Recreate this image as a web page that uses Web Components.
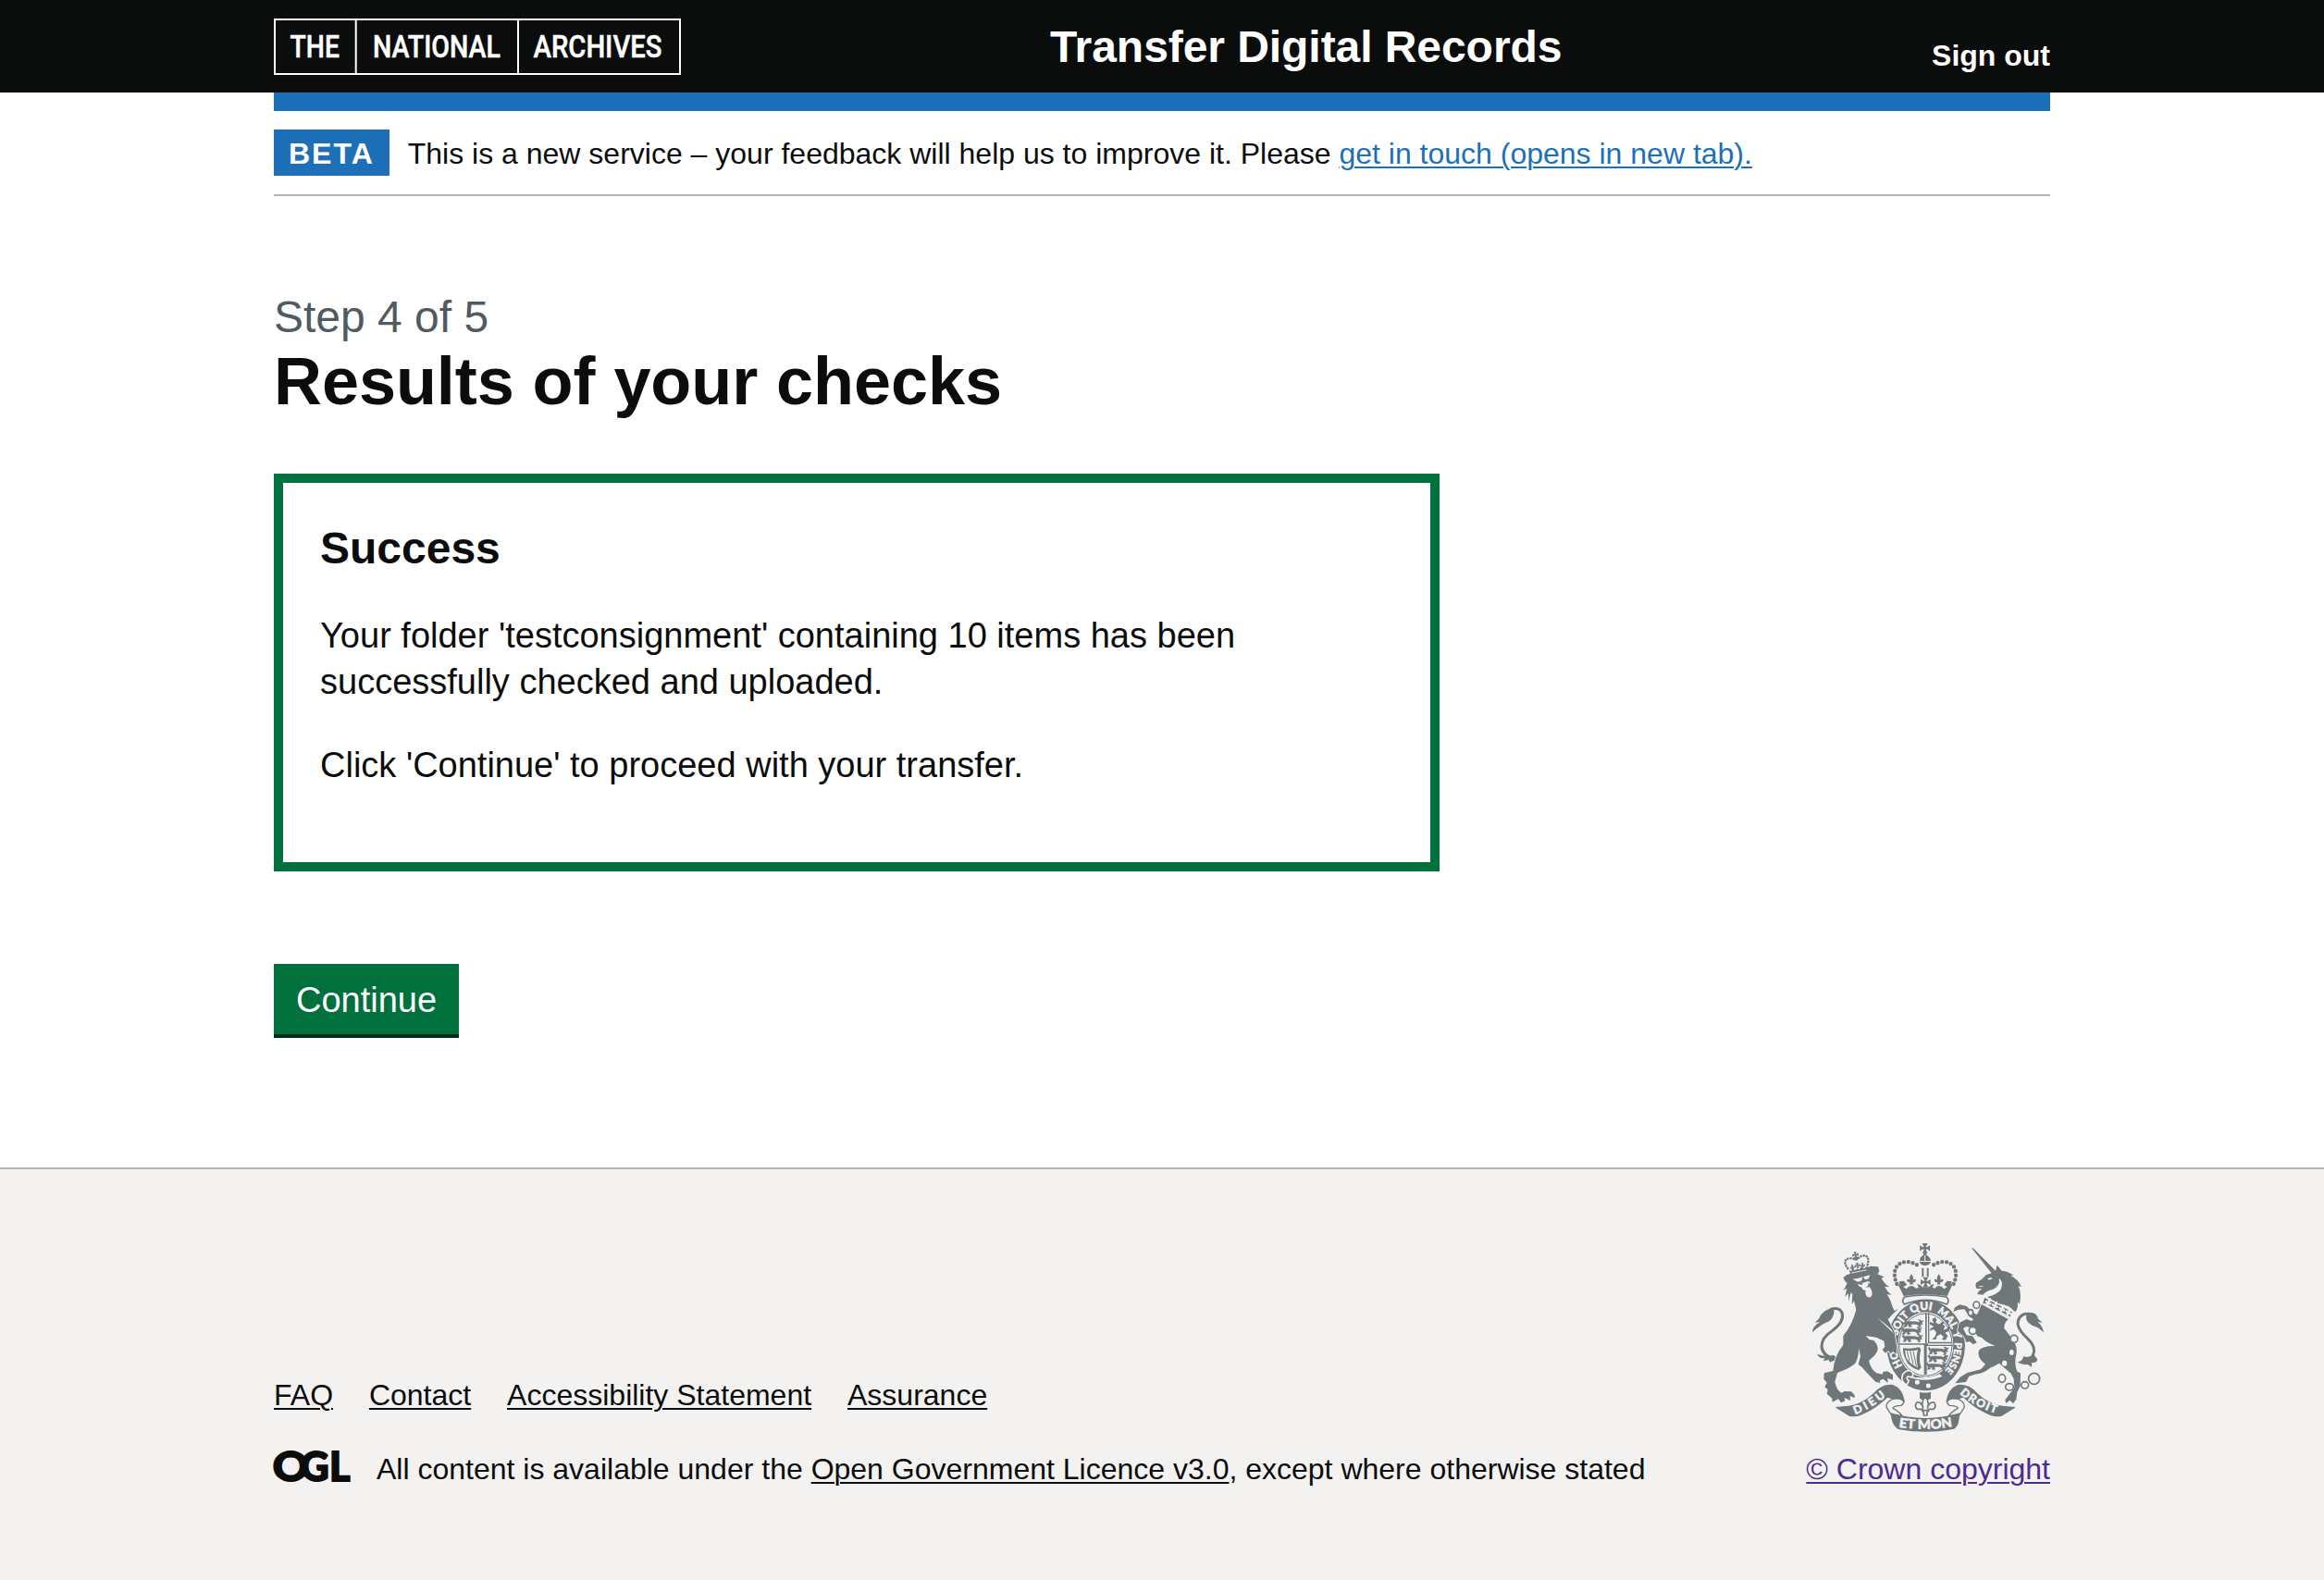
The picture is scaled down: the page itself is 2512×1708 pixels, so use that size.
<!DOCTYPE html>
<html lang="en">
<head>
<meta charset="utf-8">
<title>Results of your checks - Transfer Digital Records</title>
<style>
  html, body { margin: 0; padding: 0; }
  body {
    font-family: "Liberation Sans", Arial, Helvetica, sans-serif;
    font-size: 32px; line-height: 40px; color: #0b0c0c; background: #fff;
  }
</style>
</head>
<body>
<tdr-page></tdr-page>

<script>
const LINK = `
  a { color: inherit; text-decoration: underline; text-decoration-thickness: 2px; text-underline-offset: 3px; }
`;
const define = (name, css, html) => {
  const template = document.createElement('template');
  template.innerHTML = `<style>*{box-sizing:border-box}${css}</style>${html}`;
  customElements.define(name, class extends HTMLElement {
    constructor() {
      super();
      this.attachShadow({ mode: 'open' }).append(template.content.cloneNode(true));
    }
  });
};

/* Centred 1920px column shared by every band of the page */
define('tdr-container', `:host{display:block;width:1920px;margin:0 auto}`, `<slot></slot>`);

define('tna-logo', `:host{display:block;width:440px;height:62px} svg{display:block}`, `
<svg width="440" height="62" viewBox="296 20 440 62">
  <path d="M297,21H735V80H297ZM384.7,21V80M560,21V80" fill="none" stroke="#fff" stroke-width="2"/>
  <g fill="#fff" stroke="#fff" stroke-width=".5" font-family="Roboto, sans-serif" font-weight="500" font-size="33.8">
    <text x="313.5" y="62.3" textLength="53.5" lengthAdjust="spacingAndGlyphs">THE</text>
    <text x="403" y="62.3" textLength="138" lengthAdjust="spacingAndGlyphs">NATIONAL</text>
    <text x="576.5" y="62.3" textLength="139" lengthAdjust="spacingAndGlyphs">ARCHIVES</text>
  </g>
</svg>`);

define('tdr-header', `
  :host{display:block;background:#0b0c0c;color:#fff;height:100px}
  .row{display:grid;grid-template-columns:839px 1fr auto;height:100px;align-items:start}
  tna-logo{margin-top:20px}
  .title{font-size:48px;line-height:60px;font-weight:700;letter-spacing:-.06px;margin-top:21px;white-space:nowrap}
  .out{font-weight:700;margin-top:40px;color:#fff;text-decoration:none}`,
`<tdr-container><div class="row">
  <tna-logo></tna-logo><div class="title">Transfer Digital Records</div><a class="out">Sign out</a>
</div></tdr-container>`);

define('tdr-phase-banner', `
  :host{display:block;border-top:20px solid #1d70b8;border-bottom:2px solid #b1b4b6;padding:20px 0;height:112px}
  .row{display:flex;align-items:flex-start}
  .tag{background:#1d70b8;color:#fff;font-weight:700;letter-spacing:2px;line-height:32px;padding:10px 16px 8px;margin-right:20px;height:50px}
  .text{line-height:40px;padding-top:6px} ${LINK} a{color:#1d70b8}`,
`<div class="row"><strong class="tag">BETA</strong>
<span class="text">This is a new service – your feedback will help us to improve it. Please <a>get in touch (opens in new tab).</a></span></div>`);

define('tdr-heading', `
  :host{display:block}
  .caption{display:block;font-size:48px;line-height:60px;height:60px;padding-top:1px;color:#505a5f}
  h1{font-size:72px;line-height:80px;font-weight:700;letter-spacing:-.06px;margin:0}`,
`<span class="caption"><slot name="caption"></slot></span><h1><slot></slot></h1>`);

define('tdr-success-summary', `
  :host{display:block;width:1260px;border:10px solid #00703c;padding:40px;font-size:38px;line-height:50px}
  h2{font-size:48px;line-height:60px;height:60px;padding-top:1px;font-weight:700;margin:0 0 40px}`,
`<h2><slot name="title"></slot></h2><slot></slot>`);

define('tdr-button', `
  :host{display:block}
  button{display:block;width:200px;font:400 38px/38px "Liberation Sans",Arial,sans-serif;color:#fff;background:#00703c;
    border:4px solid transparent;padding:16px 20px 14px;box-shadow:0 4px 0 #002d18;border-radius:0;margin:0;white-space:nowrap}`,
`<button><slot></slot></button>`);

define('ogl-logo', `:host{display:block;width:84px;height:40px} svg{display:block;overflow:visible}`, `
<svg width="84" height="40" viewBox="296 1568 84 40">
  <g fill="#0b0c0c" stroke="#0b0c0c" stroke-width="1.8" font-family="Lato, sans-serif" font-weight="900" font-size="43">
    <text transform="translate(294.8 1600.6) scale(1.12 1)">O</text>
    <text x="324.5" y="1600.6">G</text>
    <text x="356" y="1600.6">L</text>
  </g>
</svg>`);

/* Royal coat of arms */
const fleur = (x, y, s = 1) => `<path transform="translate(${x} ${y}) scale(${s})" d="M0,-16Q9,-5 3,4Q8,-4 13,1Q14,8 8,9L4,8L5,15H-5L-4,8L-8,9Q-14,8 -13,1Q-8,-4 -3,4Q-9,-5 0,-16Z"/>`;
const cross = (x, y, s = 1) => `<path transform="translate(${x} ${y}) scale(${s})" d="M-9,-16H9Q3,-8 3,-3Q8,-3 16,-9V9Q8,3 3,3Q3,8 9,16H-9Q-3,8 -3,3Q-8,3 -16,9V-9Q-8,-3 -3,-3Q-3,-8 -9,-16Z"/>`;
const passant = (x, y) => `<path stroke="#6f777b" stroke-width="1.2" transform="translate(${x} ${y}) scale(1 1.15)" d="M-34,-7L-29,-11L-26,-5L-20,-7L8,-6L18,-4L22,-8L16,-11L23,-11L27,-8L33,-9L28,-3L30,3L23,1L25,9L17,10L19,6L10,1L-3,1L-9,3L-4,8L-13,10L-15,4L-20,2L-21,8L-31,9L-27,3L-30,-2Z"/>`;
define('royal-arms', `:host{display:block;width:252px;height:204px} svg{display:block;overflow:visible}`, `
<svg width="252" height="204" viewBox="54 42 756 612">
 <defs>
  <path id="motto" pathLength="360" d="M424,484A94,113 0 0 1 424,258A94,113 0 0 1 424,484"/>
  <path id="r1" d="M196,597Q250,579 304,530"/>
  <path id="r2" d="M337,638Q424,652 514,636"/>
  <path id="r3" d="M534,529Q586,577 670,599"/>
 </defs>
 <g fill="#6f777b">
  <!-- garter and shield -->
  <ellipse cx="425" cy="373" rx="127" ry="147"/>
  <ellipse cx="424" cy="371" rx="90" ry="106" fill="#f3f2f1"/>
  <ellipse cx="424" cy="371" rx="86" ry="101" fill="none" stroke="#6f777b" stroke-width="3"/>
  <path d="M419,268H423V367H337V371H419V468H428V375H512V371H432V268H436V362H508V367H428V268Z"/>
  ${passant(384,303)}${passant(379,327)}${passant(382,351)}
  ${passant(466,391)}${passant(465,416)}${passant(460,441)}
  <path d="M446,287L455,282L460,290L457,299L468,305L478,296L486,298L480,304L487,312L482,323L494,319L499,308L491,303L494,296L502,308L501,326L487,332L496,342L489,356L476,354L483,346L473,337L461,343L458,354L445,354L455,344L459,331L450,321L437,326L441,317L451,312L439,306L437,296L451,302L447,294Z"/>
  <path d="M351,382Q378,386 404,379L409,386Q400,420 410,445L402,454Q368,444 357,414Q350,400 351,382ZM358,389Q358,411 366,420Q380,438 399,444Q391,410 399,388Q377,393 358,389Z" fill-rule="evenodd"/>
  <path d="M364,392L372,424M374,392L384,434M384,392L394,440" stroke="#6f777b" stroke-width="3"/>
  <!-- strap end and buckle -->
  <path d="M362,470Q425,488 470,466L478,474Q425,496 362,474Z" fill="#f3f2f1"/>
  <path d="M350,491Q344,476 352,464Q365,448 380,459Q388,470 378,476L366,474Q360,480 370,488L362,503Z" stroke="#f3f2f1" stroke-width="5" stroke-linejoin="round"/>
  <circle cx="397" cy="493" r="7.5" fill="#f3f2f1"/><circle cx="433" cy="504" r="7.5" fill="#f3f2f1"/>
  <g fill="#f3f2f1" stroke="#f3f2f1" stroke-width="1.4" font-family="Lato, sans-serif" font-weight="900" font-size="34">
   <text><textPath href="#motto" startOffset="50">HO</textPath></text>
   <text><textPath href="#motto" startOffset="106">SOIT</textPath></text>
   <text font-size="36"><textPath href="#motto" startOffset="154">QUI</textPath></text>
   <text><textPath href="#motto" startOffset="201">MAL</textPath></text>
   <text><textPath href="#motto" startOffset="247">Y</textPath></text>
   <text font-size="32"><textPath href="#motto" startOffset="266">PENSE</textPath></text>
  </g>
  <!-- central crown -->
  ${cross(422,58,1.02)}
  <path d="M417,74H427V80Q439,85 441,99L405,99Q406,84 417,80ZM404,102H441Q437,113 422,115Q408,113 404,102Z"/>
  <path d="M422,81V99" stroke="#f3f2f1" stroke-width="3"/>
  <g fill="none" stroke="#6f777b" stroke-width="13" stroke-linecap="round" stroke-dasharray="0 14.5">
   <path d="M331,174C315,138 325,105 360,102Q382,102 402,116"/>
   <path d="M515,174C531,138 521,105 486,102Q464,102 444,116"/>
  </g>
  <path d="M415,122V151M431,122V151" stroke="#6f777b" stroke-width="6"/>
  ${fleur(378,159,1.1)}${fleur(467,159,1.1)}${cross(424,168,1)}
  <path d="M333,172L341,178L338,166L353,164L364,176L352,184L362,190Q370,180 378,180Q388,180 392,188L402,186L396,174L408,178L412,184H436L440,178L452,174L446,186L455,188Q459,180 467,180Q476,180 484,190L494,184L484,176L494,164L509,166L506,178L513,172L494,213Q423,202 353,213Z"/>
  <path d="M357,216Q424,204 491,216Q504,226 493,240Q424,212 355,240Q344,227 357,216Z" fill="#f3f2f1" stroke="#6f777b" stroke-width="5"/>
  <!-- lion -->
  <path d="M130,418Q88,405 87,376Q87,347 121,326Q160,297 154,270Q146,246 114,257" fill="none" stroke="#6f777b" stroke-width="9"/>
  <path d="M57,331Q56,311 82,297L65,299L79,286Q88,256 127,252Q130,281 111,295Q82,307 57,331ZM72,401Q94,411 126,405L140,416L114,428L110,420L92,424L97,415Q79,416 72,401Z"/>
  <path stroke="#f3f2f1" stroke-width="5" paint-order="stroke" d="M157,153L168,145L246,116L270,118L274,132L268,142L290,151L281,155Q289,172 307,184L291,182Q298,197 314,210L299,207Q310,223 317,248L323,261L336,255L319,270L302,289L322,326L330,376L329,402L318,393L310,400L304,391L294,398L284,388L292,377L289,359L264,347L230,342L241,354L256,357L264,367Q276,388 260,404L240,423Q246,450 265,463L284,467L286,459L300,457L318,469L318,485L301,480L302,495L287,482L276,487L277,495L262,491L231,459L217,443L206,435L213,407L207,381Q208,410 196,431Q183,445 138,462L130,491Q136,521 152,527L161,522L183,523L194,535L194,544L179,537L180,552L161,543L163,553L150,559L141,547L122,557L121,545L104,530L107,516L97,508L104,494L94,482L95,463L124,456Q128,406 157,372L157,342Q185,309 199,258L192,229L185,240L187,207L182,201L174,230L174,204L163,215L169,188L158,195L170,171L163,165Z"/>
  <g fill="#f3f2f1">
   <path d="M187,157Q204,159 220,151L217,163Q206,169 199,165ZM222,151L244,145L239,157L228,160ZM205,173L218,178L219,171L237,165L245,169L237,178Q251,190 251,208Q247,221 236,216Q226,209 230,195L221,193L217,185L207,181Z"/>
   <path d="M270,286L320,334L313,321L288,299Z"/>
  </g>
  <path d="M237,168L245,183L230,186L239,179Z"/>
  <!-- lion crown -->
  <g transform="rotate(-11 204 118)">
   <path d="M174,121L181,129L185,118L192,128L202,124L207,128L216,119L222,129L229,124L236,121L232,139H177Z"/>
   ${fleur(187,115,.6)}${fleur(221,115,.6)}${cross(204,114,.55)}${cross(204,79,.62)}
   <path d="M180,134H230" stroke="#f3f2f1" stroke-width="2.5"/>
   <path d="M171,117C155,87 181,78 201,94M237,117C253,87 227,78 207,94" fill="none" stroke="#6f777b" stroke-width="8" stroke-linecap="round" stroke-dasharray="0 9.3"/>
   <circle cx="204" cy="91" r="7"/>
  </g>
  <!-- unicorn -->
  <path d="M750,270Q723,276 723,305Q729,329 756,352Q785,380 772,405Q767,422 743,421" fill="none" stroke="#6f777b" stroke-width="9"/>
  <path d="M727,279Q745,264 766,267Q785,268 789,287L804,300L787,296Q804,309 807,332Q791,313 769,308Q746,296 751,274ZM741,409Q759,416 775,402L787,419Q784,430 769,429L768,443L755,435Q735,438 722,427Q739,426 741,409Z"/>
  <path d="M573,57Q579,56 583,62L651,131L656,113L671,131Q692,132 709,146L700,147Q723,158 735,183L725,180Q736,207 729,239L722,232Q726,252 715,265L693,246L658,236L625,216Q657,208 668,192Q678,166 662,155Q668,179 641,192Q622,195 610,209L592,207L596,198L607,190L590,189L586,180L588,170L607,158L620,145L638,139Z"/>
  <path d="M625,156L637,153L641,157L629,161ZM593,184L603,180L614,183Z" fill="#f3f2f1"/>
  <path stroke="#f3f2f1" stroke-width="5" paint-order="stroke" d="M612,226L694,287Q678,298 679,318Q694,337 710,358Q723,382 718,402Q710,436 722,459L732,463L731,505L721,525L718,548L708,562L697,551L685,561L682,550L701,525L712,510L710,482L701,464Q677,444 663,431Q647,441 633,446Q617,462 584,467L565,473L555,492L520,496L536,476L559,462L603,451L618,434Q588,411 597,389Q609,374 650,375Q619,363 607,349L592,343L578,318L556,312L546,318L557,340L576,343L590,364L579,370L566,360L557,364L548,344L528,326L533,300L557,288L573,294L580,289L566,280L550,256L531,257L514,264L519,250L535,241L557,246L578,268L591,273Z"/>
  <path d="M614,216L708,264L696,288L607,238Z" fill="#6f777b" stroke="#f3f2f1" stroke-width="4"/>
  <path d="M612,238L697,283" stroke="#f3f2f1" stroke-width="6"/>
  <g fill="#f3f2f1" transform="rotate(26 660 250)">${fleur(624,247,.85)}${fleur(648,247,.85)}${fleur(673,247,.85)}${fleur(697,247,.85)}</g>
  <!-- chain -->
  <g fill="#f3f2f1" stroke="#6f777b" stroke-width="5">
   <ellipse cx="589" cy="242" rx="10" ry="11"/><ellipse cx="570" cy="267" rx="8" ry="10"/>
   <circle cx="577" cy="325" r="12"/><circle cx="711" cy="352" r="12"/>
   <ellipse cx="672" cy="480" rx="11" ry="13"/><ellipse cx="696" cy="508" rx="13" ry="11"/>
   <ellipse cx="746" cy="502" rx="12" ry="11"/><circle cx="776" cy="481" r="18"/>
  </g>
  <ellipse cx="703" cy="396" rx="7" ry="9" fill="#f3f2f1"/><ellipse cx="680" cy="431" rx="8" ry="9" fill="#f3f2f1"/>
  <!-- ribbon -->
  <g stroke="#6f777b" stroke-width="4" stroke-linejoin="round">
   <path fill="#f3f2f1" d="M322,545Q293,557 298,575L314,600L348,601Q338,588 318,577Q320,569 345,568Q357,561 352,546Z"/>
   <path d="M135,574Q209,576 254,532Q282,499 318,503Q349,515 354,556Q341,540 321,546L300,540Q258,580 212,598Q193,605 176,600Z"/>
  </g>
  <g stroke="#6f777b" stroke-width="4" stroke-linejoin="round" transform="translate(847 0) scale(-1 1)">
   <path fill="#f3f2f1" d="M322,545Q293,557 298,575L314,600L348,601Q338,588 318,577Q320,569 345,568Q357,561 352,546Z"/>
   <path d="M135,574Q209,576 254,532Q282,499 318,503Q349,515 354,556Q341,540 321,546L300,540Q258,580 212,598Q193,605 176,600Z"/>
  </g>
  <path d="M311,592Q424,626 536,592L530,626Q524,643 509,646Q424,661 339,646Q314,638 311,592Z"/>
  <g fill="#f3f2f1" stroke="#f3f2f1" stroke-width="1.4" font-family="Lato, sans-serif" font-weight="900">
   <text font-size="37"><textPath href="#r1" textLength="116">DIEU</textPath></text>
   <text font-size="42"><textPath href="#r2" textLength="175" lengthAdjust="spacingAndGlyphs">ET MON</textPath></text>
   <text font-size="37"><textPath href="#r3" textLength="136">DROIT</textPath></text>
  </g>
  <!-- fleur-de-lis below the garter -->
  <path d="M405,524Q422,529 441,524V545L430,551L423,538L416,551L405,545Z"/>
  <path d="M423,540Q438,556 430,575Q437,555 451,558Q461,570 450,580L432,580L434,586L429,590V600H418V590L413,586L415,580L397,580Q386,570 396,558Q410,555 416,575Q408,556 423,540Z" fill="#f3f2f1" stroke="#6f777b" stroke-width="5" stroke-linejoin="round"/>
  <path d="M411,584H435" stroke="#6f777b" stroke-width="5"/>
 </g>
</svg>`);

define('tdr-footer', `
  :host{display:block;background:#f3f2f1;border-top:2px solid #b1b4b6;padding:80px 0 0;height:446px}
  .row{display:flex;justify-content:space-between;align-items:flex-end}
  .links{display:flex;gap:38.9px;margin-bottom:40px}
  .licence{display:flex}
  .licence span{margin-left:27px;white-space:nowrap}
  .crest{display:flex;flex-direction:column;align-items:center}
  royal-arms{margin-bottom:20px}
  ${LINK} .crest a{color:#4c2c92;white-space:nowrap}`,
`<tdr-container><div class="row">
  <div>
    <nav class="links"><a>FAQ</a><a>Contact</a><a>Accessibility Statement</a><a>Assurance</a></nav>
    <div class="licence"><ogl-logo></ogl-logo><span>All content is available under the <a>Open Government Licence v3.0</a>, except where otherwise stated</span></div>
  </div>
  <div class="crest"><royal-arms></royal-arms><a>© Crown copyright</a></div>
</div></tdr-container>`);

define('tdr-page', `
  :host{display:flex;flex-direction:column;height:1708px;overflow:hidden}
  main{flex:1;padding-top:100px}
  tdr-success-summary{margin:60px 0 100px}
  p{margin:0 0 40px}`,
`<tdr-header></tdr-header>
<tdr-container><tdr-phase-banner></tdr-phase-banner></tdr-container>
<main><tdr-container>
  <tdr-heading><span slot="caption">Step 4 of 5</span>Results of your checks</tdr-heading>
  <tdr-success-summary>
    <span slot="title">Success</span>
    <p>Your folder 'testconsignment' containing 10 items has been<br>successfully checked and uploaded.</p>
    <p>Click 'Continue' to proceed with your transfer.</p>
  </tdr-success-summary>
  <tdr-button>Continue</tdr-button>
</tdr-container></main>
<tdr-footer></tdr-footer>`);
</script>
</body>
</html>
